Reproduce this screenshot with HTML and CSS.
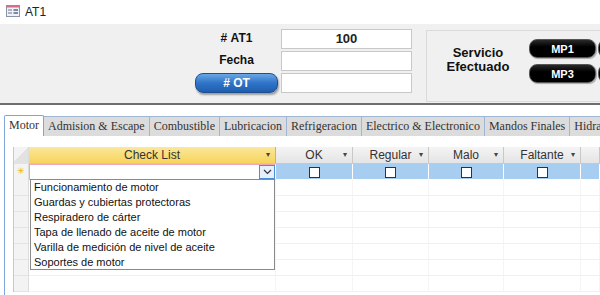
FILE: index.html
```html
<!DOCTYPE html>
<html lang="es">
<head>
    <meta charset="UTF-8">
    <title>AT1</title>
    <link rel="stylesheet" href="styles.css">
</head>
<body>

    <div class="titlebar">
        <svg class="form-icon" width="14" height="12" viewBox="0 0 14 12">
            <rect x="0.5" y="0.5" width="13" height="11" fill="#eef1f6" stroke="#8a94a6"/>
            <rect x="0.5" y="0.5" width="13" height="2" fill="#d86a8c"/>
            <rect x="2" y="4.5" width="4" height="1" fill="#6b7a90"/>
            <rect x="2" y="7.5" width="4" height="1" fill="#6b7a90"/>
            <rect x="7.5" y="4" width="4.5" height="2" fill="#7d8aa0"/>
            <rect x="7.5" y="7" width="4.5" height="2" fill="#7d8aa0"/>
        </svg>
        <span>AT1</span>
    </div>

    <div class="header">
        <div class="fields">
            <div class="label">#&nbsp;AT1</div>
            <div class="field bold">100</div>
            <div class="label">Fecha</div>
            <div class="field"></div>
            <button class="btn-ot"># OT</button>
            <div class="field"></div>
        </div>

        <div class="servicio">
            <div class="servicio-title">Servicio<br>Efectuado</div>
            <div class="mp-buttons">
                <button class="btn-mp">MP1</button>
                <button class="btn-mp"></button>
                <button class="btn-mp">MP3</button>
                <button class="btn-mp"></button>
            </div>
        </div>
    </div>

    <div class="tabs">
        <div class="tab active">Motor</div>
        <div class="tab">Admision &amp; Escape</div>
        <div class="tab">Combustible</div>
        <div class="tab">Lubricacion</div>
        <div class="tab">Refrigeracion</div>
        <div class="tab">Electrico &amp; Electronico</div>
        <div class="tab">Mandos Finales</div>
        <div class="tab">Hidraulico</div>
    </div>

    <div class="panel">
        <div class="sheet">
            <div class="row head">
                <div class="sel corner"></div>
                <div class="hcell check">Check List <span class="arrow">&#9662;</span></div>
                <div class="hcell">OK <span class="arrow">&#9662;</span></div>
                <div class="hcell">Regular <span class="arrow">&#9662;</span></div>
                <div class="hcell">Malo <span class="arrow">&#9662;</span></div>
                <div class="hcell">Faltante <span class="arrow">&#9662;</span></div>
                <div class="hcell"></div>
            </div>

            <div class="row new">
                <div class="sel star">&#10035;</div>
                <div class="cell current">
                    <span class="combo-btn">
                        <svg width="9" height="6" viewBox="0 0 9 6"><path d="M1 1 L4.5 4.5 L8 1" fill="none" stroke="#333" stroke-width="1.2"/></svg>
                    </span>
                </div>
                <div class="cell"><span class="chk"></span></div>
                <div class="cell"><span class="chk"></span></div>
                <div class="cell"><span class="chk"></span></div>
                <div class="cell"><span class="chk"></span></div>
                <div class="cell"></div>
            </div>

            <div class="row empty"><div class="sel"></div><div class="cell"></div><div class="cell"></div><div class="cell"></div><div class="cell"></div><div class="cell"></div><div class="cell"></div></div>
            <div class="row empty"><div class="sel"></div><div class="cell"></div><div class="cell"></div><div class="cell"></div><div class="cell"></div><div class="cell"></div><div class="cell"></div></div>
            <div class="row empty"><div class="sel"></div><div class="cell"></div><div class="cell"></div><div class="cell"></div><div class="cell"></div><div class="cell"></div><div class="cell"></div></div>
            <div class="row empty"><div class="sel"></div><div class="cell"></div><div class="cell"></div><div class="cell"></div><div class="cell"></div><div class="cell"></div><div class="cell"></div></div>
            <div class="row empty"><div class="sel"></div><div class="cell"></div><div class="cell"></div><div class="cell"></div><div class="cell"></div><div class="cell"></div><div class="cell"></div></div>
            <div class="row empty"><div class="sel"></div><div class="cell"></div><div class="cell"></div><div class="cell"></div><div class="cell"></div><div class="cell"></div><div class="cell"></div></div>
            <div class="row empty"><div class="sel"></div><div class="cell"></div><div class="cell"></div><div class="cell"></div><div class="cell"></div><div class="cell"></div><div class="cell"></div></div>

            <ul class="dropdown">
                <li>Funcionamiento de motor</li>
                <li>Guardas y cubiertas protectoras</li>
                <li>Respiradero de cárter</li>
                <li>Tapa de llenado de aceite de motor</li>
                <li>Varilla de medición de nivel de aceite</li>
                <li>Soportes de motor</li>
            </ul>
        </div>
    </div>

</body>
</html>
```

FILE: styles.css
```css
body {
    margin: 0;
    width: 600px;
    height: 295px;
    overflow: hidden;
    background: #fff;
    font-family: "Liberation Sans", Arial, sans-serif;
}

/* title bar */
.titlebar {
    height: 24px;
    display: flex;
    align-items: center;
    padding-left: 6px;
    gap: 5px;
    font-size: 12px;
    color: #222;
}

.form-icon {
    margin-top: -2px;
}

/* form header */
.header {
    height: 79px;
    background: #f0f0f0;
    border-bottom: 2px solid #6e6e6e;
    display: flex;
    align-items: flex-start;
    overflow: hidden;
}

.fields {
    display: grid;
    grid-template-columns: 83px 131px;
    grid-auto-rows: 20px;
    column-gap: 3px;
    row-gap: 2px;
    margin: 5px 0 0 195px;
    flex-shrink: 0;
}

.label {
    font-weight: bold;
    font-size: 12px;
    color: #111;
    text-align: center;
    line-height: 18px;
}

.field {
    background: #fff;
    border: 1px solid #c8c8c8;
    font-size: 13px;
    text-align: center;
    line-height: 18px;
    color: #222;
}

.field.bold {
    font-weight: bold;
}

.btn-ot {
    height: 20px;
    border: 1px solid #1e4f8f;
    border-radius: 8px;
    background: linear-gradient(#6aa6e6, #2f74c8 50%, #1f5eae);
    color: #fff;
    font-family: "Liberation Sans", Arial, sans-serif;
    font-weight: bold;
    font-size: 12px;
    padding: 0;
    box-shadow: 1px 2px 2px rgba(0, 0, 0, 0.35);
}

.servicio {
    margin: 6px 0 0 14px;
    height: 70px;
    width: 260px;
    flex-shrink: 0;
    border: 1px solid #dadada;
    display: flex;
    align-items: flex-start;
}

.servicio-title {
    width: 102px;
    flex-shrink: 0;
    text-align: center;
    font-weight: bold;
    font-size: 13px;
    line-height: 14px;
    color: #111;
    margin-top: 15px;
}

.mp-buttons {
    display: grid;
    grid-template-columns: 67px 67px;
    grid-auto-rows: 19px;
    column-gap: 2px;
    row-gap: 6px;
    margin-top: 8px;
    flex-shrink: 0;
}

.btn-mp {
    border: 1px solid #555;
    border-radius: 8px;
    background: linear-gradient(#2a2a2a, #000 40%, #000);
    color: #fff;
    font-family: "Liberation Sans", Arial, sans-serif;
    font-weight: bold;
    font-size: 11px;
    padding: 0;
    box-shadow: 1px 1px 1px rgba(0, 0, 0, 0.3);
}

/* tabs */
.tabs {
    display: flex;
    align-items: flex-end;
    margin: 10px 0 0 4px;
    height: 21px;
    white-space: nowrap;
    font-family: "Liberation Serif", "Times New Roman", serif;
    font-size: 12px;
    color: #333;
}

.tab {
    height: 19px;
    line-height: 19px;
    padding: 0 4px;
    background: #dcdcdc;
    border: 1px solid #9fb6d4;
    border-bottom: none;
    margin-left: -1px;
    flex-shrink: 0;
}

.tab.active {
    height: 20px;
    background: #fff;
    border-color: #7ea6d8;
    border-radius: 2px 2px 0 0;
    margin-left: 0;
    position: relative;
    z-index: 1;
}

/* tab panel */
.panel {
    border-left: 1px solid #7ea6d8;
    margin-left: 4px;
    height: 160px;
    padding: 11px 0 0 8px;
}

.sheet {
    position: relative;
    border-left: 1px solid #c9c9c9;
    font-size: 11px;
    color: #333;
}

.row {
    display: grid;
    grid-template-columns: 15px 247px 77px 76px 75px 77px 1fr;
    height: 15px;
    border-bottom: 1px solid #f3f1e8;
}

.row.head {
    height: 16px;
    border-bottom: 1px solid #c8c8c8;
}

.sel {
    background: #f3f3f3;
    border-right: 1px solid #dcdcdc;
    border-bottom: 1px solid #e3e3e3;
    margin-bottom: -1px;
}

.sel.corner {
    background: linear-gradient(135deg, #f3f3f3 50%, #e2e2e2 50%);
}

.sel.star {
    color: #e8b400;
    font-size: 9px;
    line-height: 15px;
    text-align: center;
}

.hcell {
    position: relative;
    background: linear-gradient(#f4f4f4, #e4e4e4);
    border-right: 1px solid #c8c8c8;
    text-align: center;
    line-height: 16px;
    font-size: 12px;
    color: #333;
}

.hcell.check {
    background: linear-gradient(#fbe79c, #f7d45a);
    border-right-color: #d7b54a;
}

.arrow {
    position: absolute;
    right: 5px;
    top: 0;
    font-size: 8px;
    color: #444;
}

.cell {
    border-right: 1px solid #f5f5f5;
}

.row.new {
    background: #a7cdf0;
    border-bottom: 1px solid #fff;
}

.row.new .cell {
    border-right: 1px solid #fff;
    display: flex;
    align-items: center;
    justify-content: center;
}

.cell.current {
    background: #fff;
    border: 1px solid #f2a7b5;
    justify-content: flex-end !important;
}

.combo-btn {
    width: 14px;
    height: 12px;
    border: 1px solid #4b8fd6;
    display: flex;
    align-items: center;
    justify-content: center;
    background: #e6f0fb;
}

.chk {
    width: 11px;
    height: 11px;
    background: #fff;
    border: 1px solid #333;
    box-sizing: border-box;
}

/* combo list */
.dropdown {
    position: absolute;
    left: 16px;
    top: 32px;
    width: 245px;
    height: 91px;
    margin: 0;
    padding: 0 0 0 3px;
    list-style: none;
    background: #fff;
    border: 1px solid #8a8a8a;
    box-sizing: border-box;
    font-size: 11px;
    color: #111;
}

.dropdown li {
    height: 15px;
    line-height: 15px;
}
```
